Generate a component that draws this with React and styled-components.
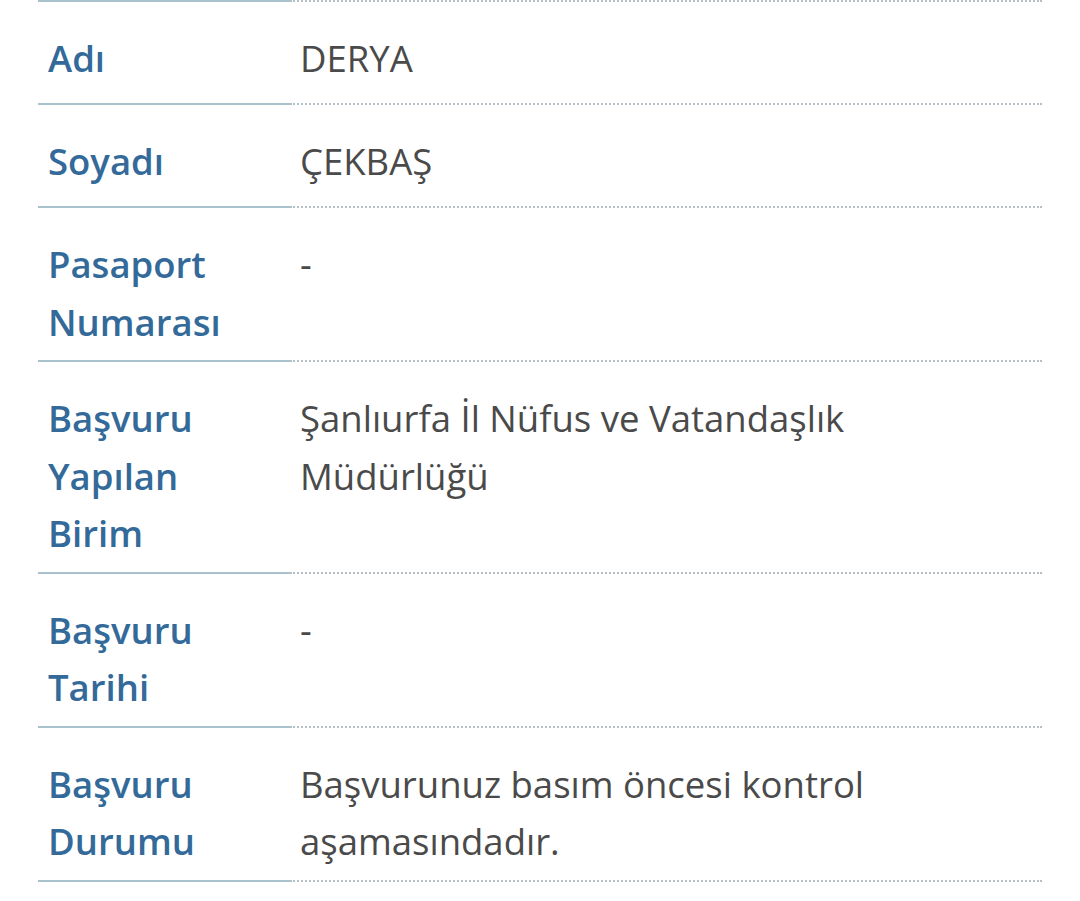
import React from "react";
import styled, { createGlobalStyle } from "styled-components";

const GlobalStyle = createGlobalStyle`
  html, body {
    margin: 0;
    padding: 0;
    background: #ffffff;
  }
  body {
    font-family: "Open Sans", "Noto Sans", sans-serif;
  }
`;

const Page = styled.div`
  padding: 0 38px;
  width: 1080px;
  box-sizing: border-box;
`;

const Table = styled.div`
  display: grid;
  grid-template-columns: 252px 752px;
`;

const Row = styled.div`
  display: contents;
`;

const Cell = styled.div`
  box-sizing: border-box;
  min-height: ${(p) => (p.$first ? "105px" : "103px")};
  padding: 28px 16px 9px 10px;
  font-size: 36.5px;
  line-height: 57.5px;
  ${(p) =>
    p.$first
      ? `border-top: 2px ${p.$value ? "dotted #b6bfc6" : "solid #a9c0cd"};`
      : ""}
`;

const Label = styled(Cell)`
  color: #336a99;
  font-weight: 600;
  border-bottom: 2px solid #a9c0cd;
`;

const Value = styled(Cell)`
  color: #4a4a4a;
  font-weight: 400;
  border-bottom: 2px dotted #b6bfc6;
`;

const rows = [
  ["Adı", "DERYA"],
  ["Soyadı", "ÇEKBAŞ"],
  ["Pasaport Numarası", "-"],
  ["Başvuru Yapılan Birim", "Şanlıurfa İl Nüfus ve Vatandaşlık Müdürlüğü"],
  ["Başvuru Tarihi", "-"],
  ["Başvuru Durumu", "Başvurunuz basım öncesi kontrol aşamasındadır."],
];

export default function App() {
  return (
    <>
      <GlobalStyle />
      <Page>
        <Table>
          {rows.map(([label, value], i) => (
            <Row key={label}>
              <Label $first={i === 0}>{label}</Label>
              <Value $first={i === 0} $value>
                {value}
              </Value>
            </Row>
          ))}
        </Table>
      </Page>
    </>
  );
}
